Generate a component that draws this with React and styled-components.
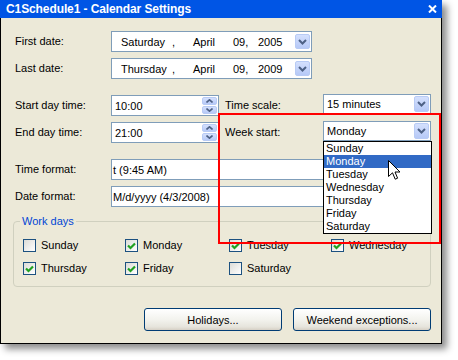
import React from 'react';
import styled, { createGlobalStyle } from 'styled-components';

const Global = createGlobalStyle`
  html, body { margin: 0; padding: 0; background: #ffffff; }
  body { font-family: "Liberation Sans", Arial, sans-serif; font-size: 11px; color: #000; }
  * { box-sizing: border-box; }
`;

const Stage = styled.div`
  position: relative;
  width: 458px;
  height: 360px;
  overflow: hidden;
  background: #fff;
`;

const Window = styled.div`
  width: 442px;
  height: 344px;
  border: 1px solid #000;
  border-top: none;
  background: #ece9d8;
  box-shadow: 5px 5px 7px rgba(0, 0, 0, 0.45);
  display: flex;
  flex-direction: column;
`;

const TitleBar = styled.div`
  height: 18px;
  margin: 0 -1px;
  background: #0055e5;
  display: flex;
  align-items: center;
  justify-content: space-between;
  padding: 0 5px 0 6px;
`;

const TitleText = styled.span`
  color: #fff;
  font-weight: bold;
  font-size: 12px;
  letter-spacing: -0.1px;
`;

const Body = styled.div`
  display: flex;
  flex-direction: column;
  padding-top: 13px;
`;

const Row = styled.div`
  display: flex;
  align-items: flex-start;
  padding-left: 14px;
  margin-top: ${p => p.$gap || 0}px;
  height: 21px;
`;

const Label = styled.span`
  width: ${p => p.$w || 96}px;
  height: 21px;
  line-height: 21px;
  flex: none;
  margin-left: ${p => p.$ml || 0}px;
`;

const Box = styled.div`
  position: relative;
  width: ${p => p.$w}px;
  height: ${p => p.$h || 21}px;
  margin-top: ${p => p.$mt || 0}px;
  border: 1px solid #7f9db9;
  background: #fff;
  display: flex;
  align-items: center;
  padding-left: ${p => p.$pl ?? 3}px;
  flex: none;
  white-space: pre;
`;

const DateField = styled.span`
  display: inline-block;
  width: ${p => p.$w}px;
`;

const DropBtn = styled.span`
  margin-left: auto;
  margin-right: 1px;
  width: 15px;
  height: ${p => p.$h || 15}px;
  border-radius: 2px;
  border: 1px solid #b8cbf5;
  background: linear-gradient(#d4e0fd, #b6c9f7);
  display: flex;
  align-items: center;
  justify-content: center;
`;

const Spin = styled.span`
  margin-left: auto;
  margin-right: 1px;
  width: 15px;
  height: 17px;
  display: flex;
  flex-direction: column;
  gap: 1px;
`;

const SpinHalf = styled.span`
  flex: 1;
  border-radius: 2px;
  border: 1px solid #b8cbf5;
  background: linear-gradient(#d4e0fd, #b6c9f7);
  display: flex;
  align-items: center;
  justify-content: center;
`;

const ListBox = styled.div`
  position: absolute;
  top: calc(100% + 1px);
  left: -1px;
  width: 109px;
  border: 1px solid #000;
  background: #fff;
  z-index: 5;
`;

const ListItem = styled.div`
  height: 13px;
  line-height: 13px;
  padding-left: 2px;
  background: ${p => (p.$sel ? '#316ac5' : '#fff')};
  color: ${p => (p.$sel ? '#fff' : '#000')};
`;

const Group = styled.fieldset`
  margin: 8px 10px 0 12px;
  padding: 11px 0 11px 9px;
  border: 1px solid #d0d0bf;
  border-radius: 4px;
`;

const Legend = styled.legend`
  color: #0046d5;
  font-size: 11px;
  line-height: 13px;
  padding: 0 2px;
  margin-left: -3px;
`;

const DayGrid = styled.div`
  display: grid;
  grid-template-columns: 102px 104px 102px 1fr;
  row-gap: 10px;
`;

const Day = styled.label`
  display: flex;
  align-items: center;
  gap: 5px;
  height: 13px;
  line-height: 13px;
`;

const Check = styled.span`
  width: 13px;
  height: 13px;
  border: 1px solid #1c5180;
  background: linear-gradient(135deg, #dcdcd7 0%, #ffffff 100%);
  display: flex;
  align-items: center;
  justify-content: center;
  flex: none;
`;

const ButtonBar = styled.div`
  display: flex;
  justify-content: flex-end;
  gap: 11px;
  margin-top: 21px;
  padding-right: 10px;
`;

const Button = styled.button`
  width: 138px;
  height: 23px;
  border: 1px solid #003c74;
  border-radius: 3px;
  background: linear-gradient(#ffffff 0%, #f3f3ee 50%, #e6e4dc 85%, #d6d0c5 100%);
  font-family: inherit;
  font-size: 11px;
  color: #000;
  padding: 0;
`;

const Annotation = styled.div`
  position: absolute;
  left: 218px;
  top: 113px;
  width: 223px;
  height: 131px;
  border: 2px solid #ff0000;
  pointer-events: none;
  z-index: 10;
`;

const Cursor = styled.svg`
  position: absolute;
  left: 388px;
  top: 160px;
  z-index: 11;
`;

const Chevron = ({ up, w = 9, h = 6 }) => (
  <svg width={w} height={h} viewBox="0 0 9 6">
    <polyline
      points={up ? '1,5 4.5,1.5 8,5' : '1,1 4.5,4.5 8,1'}
      fill="none"
      stroke="#4d6185"
      strokeWidth="2"
    />
  </svg>
);

const SmallChevron = ({ up }) => (
  <svg width="7" height="4" viewBox="0 0 7 4">
    <polyline
      points={up ? '0.5,3.5 3.5,0.8 6.5,3.5' : '0.5,0.5 3.5,3.2 6.5,0.5'}
      fill="none"
      stroke="#4d6185"
      strokeWidth="1.6"
    />
  </svg>
);

const CheckBox = ({ on }) => (
  <Check>
    {on && (
      <svg width="9" height="8" viewBox="0 0 9 8">
        <polyline points="1,3.5 3.5,6 8,1.5" fill="none" stroke="#21a121" strokeWidth="2.2" />
      </svg>
    )}
  </Check>
);

const weekdays = ['Sunday', 'Monday', 'Tuesday', 'Wednesday', 'Thursday', 'Friday', 'Saturday'];
const workDays = [
  ['Sunday', false],
  ['Monday', true],
  ['Tuesday', true],
  ['Wednesday', true],
  ['Thursday', true],
  ['Friday', true],
  ['Saturday', false],
];

const DateBox = ({ wd, year }) => (
  <Box $w={201} $pl={9}>
    <DateField $w={51}>{wd}</DateField>
    <DateField $w={21}>,</DateField>
    <DateField $w={40}>April</DateField>
    <DateField $w={25}>09,</DateField>
    <DateField $w={30}>{year}</DateField>
    <DropBtn>
      <Chevron />
    </DropBtn>
  </Box>
);

const SpinBox = ({ value }) => (
  <Box $w={108} $pl={3}>
    {value}
    <Spin>
      <SpinHalf>
        <SmallChevron up />
      </SpinHalf>
      <SpinHalf>
        <SmallChevron />
      </SpinHalf>
    </Spin>
  </Box>
);

export default function App() {
  return (
    <Stage>
      <Global />
      <Window>
        <TitleBar>
          <TitleText>C1Schedule1 - Calendar Settings</TitleText>
          <svg width="9" height="8" viewBox="0 0 9 8">
            <path d="M1 0.5 L8 7.5 M8 0.5 L1 7.5" stroke="#fff" strokeWidth="2" />
          </svg>
        </TitleBar>
        <Body>
          <Row>
            <Label>First date:</Label>
            <DateBox wd="Saturday" year="2005" />
          </Row>
          <Row $gap={6}>
            <Label>Last date:</Label>
            <DateBox wd="Thursday" year="2009" />
          </Row>
          <Row $gap={16}>
            <Label>Start day time:</Label>
            <SpinBox value="10:00" />
            <Label $w={98} $ml={6}>Time scale:</Label>
            <Box $w={108} $h={20} $mt={-1}>
              15 minutes
              <DropBtn $h={16}>
                <Chevron />
              </DropBtn>
            </Box>
          </Row>
          <Row $gap={6}>
            <Label>End day time:</Label>
            <SpinBox value="21:00" />
            <Label $w={98} $ml={6}>Week start:</Label>
            <Box $w={108} $h={20} $mt={-1}>
              Monday
              <DropBtn $h={16}>
                <Chevron />
              </DropBtn>
              <ListBox>
                {weekdays.map(d => (
                  <ListItem key={d} $sel={d === 'Monday'}>
                    {d}
                  </ListItem>
                ))}
              </ListBox>
            </Box>
          </Row>
          <Row $gap={16}>
            <Label>Time format:</Label>
            <Box $w={320} $pl={1}>
              t (9:45 AM)
              <DropBtn>
                <Chevron />
              </DropBtn>
            </Box>
          </Row>
          <Row $gap={6}>
            <Label>Date format:</Label>
            <Box $w={320} $pl={1}>
              M/d/yyyy (4/3/2008)
              <DropBtn>
                <Chevron />
              </DropBtn>
            </Box>
          </Row>
          <Group>
            <Legend>Work days</Legend>
            <DayGrid>
              {workDays.map(([d, on]) => (
                <Day key={d}>
                  <CheckBox on={on} />
                  {d}
                </Day>
              ))}
            </DayGrid>
          </Group>
          <ButtonBar>
            <Button>Holidays...</Button>
            <Button>Weekend exceptions...</Button>
          </ButtonBar>
        </Body>
      </Window>
      <Annotation />
      <Cursor width="13" height="21" viewBox="0 0 13 21">
        <path
          d="M0.5 0.5 L0.5 16.5 L4.5 12.8 L7.2 19.2 L9.6 18.2 L7 12 L12 12 Z"
          fill="#fff"
          stroke="#000"
          strokeWidth="1"
          strokeLinejoin="miter"
        />
      </Cursor>
    </Stage>
  );
}
